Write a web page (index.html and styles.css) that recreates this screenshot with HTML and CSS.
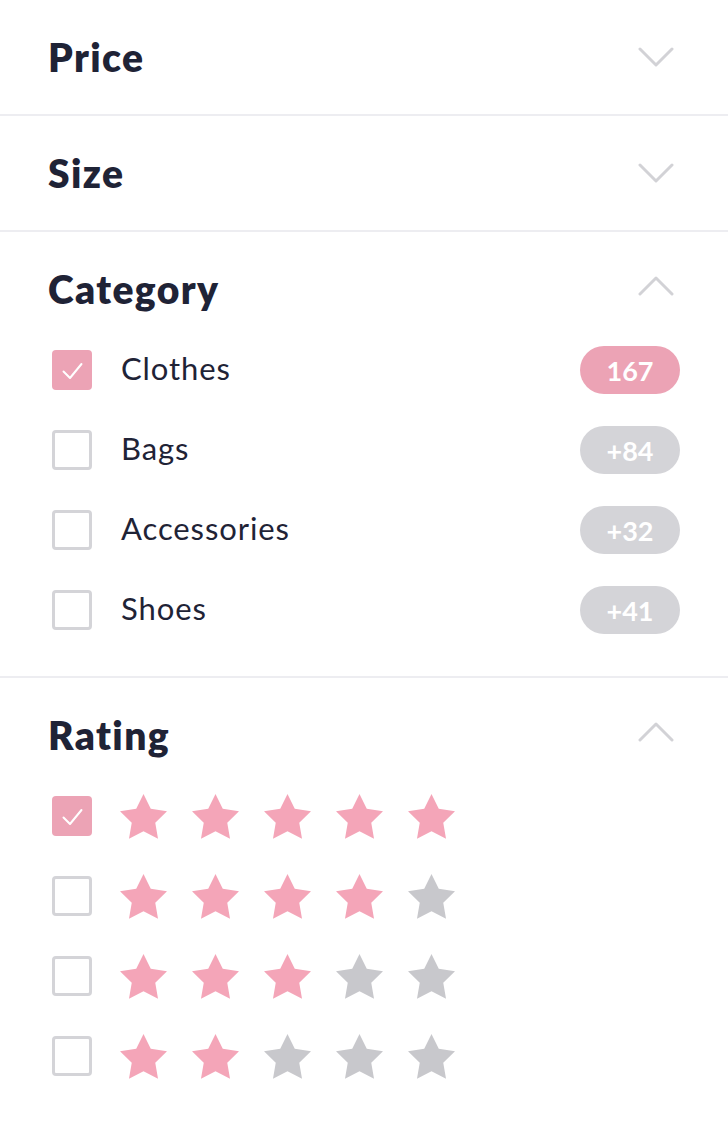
FILE: index.html
```html
<!DOCTYPE html>
<html lang="en">
<head>
<meta charset="utf-8">
<title>Filters</title>
<link rel="stylesheet" href="styles.css">
</head>
<body>
<svg width="0" height="0" class="defs">
  <defs>
    <symbol id="star" viewBox="2 2 20 19.05">
      <path d="M12 2l3.09 6.26L22 9.27l-5 4.87 1.18 6.88L12 17.77l-6.18 3.25L7 14.14 2 9.27l6.91-1.01z"/>
    </symbol>
  </defs>
</svg>
<div class="filters">
  <section class="panel">
    <div class="panel-head">
      <h2 class="panel-title">Price</h2>
      <svg class="chev" viewBox="0 0 36 20"><path d="M2 2 L18 18 L34 2"/></svg>
    </div>
  </section>
  <section class="panel">
    <div class="panel-head">
      <h2 class="panel-title">Size</h2>
      <svg class="chev" viewBox="0 0 36 20"><path d="M2 2 L18 18 L34 2"/></svg>
    </div>
  </section>
  <section class="panel open">
    <div class="panel-head">
      <h2 class="panel-title">Category</h2>
      <svg class="chev up" viewBox="0 0 36 20"><path d="M2 18 L18 2 L34 18"/></svg>
    </div>
    <div class="panel-body">
      <div class="row">
        <span class="box checked"><svg viewBox="0 0 40 40"><path d="M11.5 21.5 L18 28 L29.5 14"/></svg></span>
        <span class="label">Clothes</span>
        <span class="badge pink">167</span>
      </div>
      <div class="row">
        <span class="box"></span>
        <span class="label">Bags</span>
        <span class="badge">+84</span>
      </div>
      <div class="row">
        <span class="box"></span>
        <span class="label">Accessories</span>
        <span class="badge">+32</span>
      </div>
      <div class="row">
        <span class="box"></span>
        <span class="label">Shoes</span>
        <span class="badge">+41</span>
      </div>
    </div>
  </section>
  <section class="panel open last">
    <div class="panel-head">
      <h2 class="panel-title">Rating</h2>
      <svg class="chev up" viewBox="0 0 36 20"><path d="M2 18 L18 2 L34 18"/></svg>
    </div>
    <div class="panel-body">
      <div class="row">
        <span class="box checked"><svg viewBox="0 0 40 40"><path d="M11.5 21.5 L18 28 L29.5 14"/></svg></span>
        <span class="stars">
          <svg class="star on"><use href="#star"/></svg>
          <svg class="star on"><use href="#star"/></svg>
          <svg class="star on"><use href="#star"/></svg>
          <svg class="star on"><use href="#star"/></svg>
          <svg class="star on"><use href="#star"/></svg>
        </span>
      </div>
      <div class="row">
        <span class="box"></span>
        <span class="stars">
          <svg class="star on"><use href="#star"/></svg>
          <svg class="star on"><use href="#star"/></svg>
          <svg class="star on"><use href="#star"/></svg>
          <svg class="star on"><use href="#star"/></svg>
          <svg class="star"><use href="#star"/></svg>
        </span>
      </div>
      <div class="row">
        <span class="box"></span>
        <span class="stars">
          <svg class="star on"><use href="#star"/></svg>
          <svg class="star on"><use href="#star"/></svg>
          <svg class="star on"><use href="#star"/></svg>
          <svg class="star"><use href="#star"/></svg>
          <svg class="star"><use href="#star"/></svg>
        </span>
      </div>
      <div class="row">
        <span class="box"></span>
        <span class="stars">
          <svg class="star on"><use href="#star"/></svg>
          <svg class="star on"><use href="#star"/></svg>
          <svg class="star"><use href="#star"/></svg>
          <svg class="star"><use href="#star"/></svg>
          <svg class="star"><use href="#star"/></svg>
        </span>
      </div>
    </div>
  </section>
</div>
</body>
</html>
```
FILE: styles.css
```css
html, body {
  margin: 0;
  padding: 0;
  background: #ffffff;
}
body {
  font-family: "Lato", "Open Sans", sans-serif;
  color: #1f2336;
}
.defs {
  position: absolute;
  width: 0;
  height: 0;
}
.filters {
  width: 728px;
}
.panel {
  border-bottom: 2px solid #ededf1;
}
.panel.last {
  border-bottom: none;
}
.panel-head {
  height: 114px;
  display: flex;
  align-items: center;
  justify-content: space-between;
  padding: 0 48px 0 48px;
}
.panel-title {
  margin: 0;
  font-size: 39px;
  font-weight: 800;
  letter-spacing: 1.4px;
  line-height: 1;
}
.chev {
  width: 36px;
  height: 20px;
  margin-right: 6px;
  fill: none;
  stroke: #d2d2d6;
  stroke-width: 3;
  stroke-linecap: round;
  stroke-linejoin: round;
}
.chev.up {
  margin-bottom: 6px;
}
.panel-body {
  display: flex;
  flex-direction: column;
  gap: 40px;
  padding: 4px 48px 46px 52px;
}
.row {
  height: 40px;
  display: flex;
  align-items: center;
}
.box {
  width: 40px;
  height: 40px;
  box-sizing: border-box;
  border: 3px solid #d4d4d8;
  border-radius: 4px;
  flex: none;
  display: flex;
}
.box.checked {
  border: none;
  background: #eca3b5;
}
.box svg {
  width: 40px;
  height: 40px;
  fill: none;
  stroke: #ffffff;
  stroke-width: 2;
  stroke-linecap: round;
  stroke-linejoin: round;
}
.label {
  margin-left: 29px;
  font-size: 31px;
  font-weight: 400;
  letter-spacing: 0.9px;
  flex: 1;
  position: relative;
  top: -2px;
}
.badge {
  width: 100px;
  height: 48px;
  border-radius: 24px;
  background: #d4d4d8;
  color: #ffffff;
  font-size: 27px;
  font-weight: 700;
  display: flex;
  align-items: center;
  justify-content: center;
}
.badge.pink {
  background: #eca3b5;
}
.stars {
  margin-left: 28px;
  display: flex;
  gap: 25px;
}
.star {
  width: 47px;
  height: 45px;
  fill: #c8c8cc;
}
.star.on {
  fill: #f4a5b8;
}
```
